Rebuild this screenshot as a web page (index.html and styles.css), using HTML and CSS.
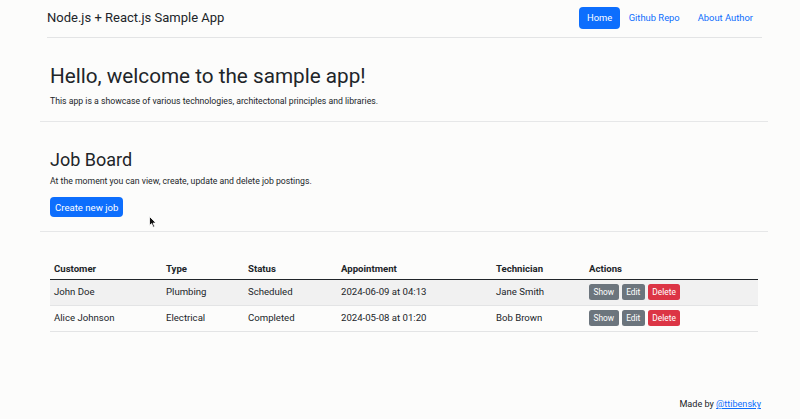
FILE: index.html
```html
<!DOCTYPE html>
<html lang="en">
<head>
<meta charset="utf-8">
<title>Node.js + React.js Sample App</title>
<link rel="stylesheet" href="styles.css">
</head>
<body>
<header class="navbar">
  <a class="brand" href="#">Node.js + React.js Sample App</a>
  <nav class="nav">
    <a class="nav-link active" href="#">Home</a>
    <a class="nav-link" href="#">Github Repo</a>
    <a class="nav-link" href="#">About Author</a>
  </nav>
</header>
<main class="main">
  <section class="hero">
    <h1 class="title">Hello, welcome to the sample app!</h1>
    <p class="lead">This app is a showcase of various technologies, architectonal principles and libraries.</p>
  </section>
  <hr class="divider">
  <section class="board">
    <h2 class="subtitle">Job Board</h2>
    <p class="lead">At the moment you can view, create, update and delete job postings.</p>
    <button class="btn btn-primary">Create new job</button>
  </section>
  <hr class="divider">
  <section class="jobs">
    <table class="table">
      <colgroup>
        <col class="c1"><col class="c2"><col class="c3"><col class="c4"><col class="c5"><col class="c6">
      </colgroup>
      <thead>
        <tr><th>Customer</th><th>Type</th><th>Status</th><th>Appointment</th><th>Technician</th><th>Actions</th></tr>
      </thead>
      <tbody>
        <tr class="striped">
          <td>John Doe</td><td>Plumbing</td><td>Scheduled</td><td>2024-06-09 at 04:13</td><td>Jane Smith</td>
          <td><div class="actions"><button class="btn-sm gray">Show</button><button class="btn-sm gray">Edit</button><button class="btn-sm red">Delete</button></div></td>
        </tr>
        <tr>
          <td>Alice Johnson</td><td>Electrical</td><td>Completed</td><td>2024-05-08 at 01:20</td><td>Bob Brown</td>
          <td><div class="actions"><button class="btn-sm gray">Show</button><button class="btn-sm gray">Edit</button><button class="btn-sm red">Delete</button></div></td>
        </tr>
      </tbody>
    </table>
  </section>
</main>
<footer class="footer">Made by <a href="#">@ttibensky</a></footer>
<svg class="cursor" width="8" height="12" viewBox="0 0 8 12"><path d="M0.5 0.5 L0.5 9.5 L2.6 7.6 L4.2 11.2 L5.6 10.6 L4.1 7.1 L7 7 Z" fill="#111" stroke="#fff" stroke-width="0.8"/></svg>
</body>
</html>
```
FILE: styles.css
```css
* { box-sizing: border-box; }
html, body { margin: 0; padding: 0; }
body {
  background: #fcfcfb;
  color: #212529;
  font-family: Roboto, "Noto Sans", sans-serif;
  font-size: 9.6px;
  line-height: 1.5;
  height: 419px;
  overflow: hidden;
  position: relative;
}
a { color: #0d6efd; text-decoration: none; }

.navbar {
  margin: 0 38px 0 47px;
  height: 38px;
  border-bottom: 1px solid #e3e4e5;
  display: flex;
  align-items: center;
  justify-content: space-between;
}
.brand {
  color: #212529;
  font-size: 13px;
  padding-bottom: 2px;
}
.nav { display: flex; align-items: center; padding-bottom: 1px; }
.nav-link {
  font-size: 9.4px;
  line-height: 22px;
  height: 22px;
  padding: 0 9px;
  border-radius: 4px;
  color: #0d6efd;
}
.nav-link.active { background: #0d6efd; color: #fff; padding: 0 7.5px; }

.main { margin: 0 32px 0 40px; }
.hero { padding: 24px 10px 0; }
.title {
  margin: 0;
  font-size: 20.7px;
  font-weight: 400;
  line-height: 29px;
}
.lead { margin: 3px 0 0; font-size: 8.7px; line-height: 14px; }
.divider {
  border: 0;
  border-top: 1px solid #e6e7e8;
  margin: 13px 0 0;
}
.board { padding: 26px 10px 0; }
.subtitle {
  margin: 0;
  font-size: 18px;
  font-weight: 400;
  line-height: 23px;
}
.board .lead { margin-top: 3px; }
.btn {
  font-family: inherit;
  border: 0;
  border-radius: 4px;
  margin-top: 9px;
  height: 20px;
  padding: 0 5px;
  font-size: 9.6px;
  display: block;
}
.btn-primary { background: #0d6efd; color: #fff; }
.board + .divider { margin-top: 14px; }

.jobs { padding: 23px 10px 0; }
.table {
  width: 100%;
  border-collapse: collapse;
  table-layout: fixed;
}
.c1 { width: 112px; } .c2 { width: 82px; } .c3 { width: 93px; }
.c4 { width: 155px; } .c5 { width: 93px; }
.table th {
  text-align: left;
  font-weight: 700;
  font-size: 9.6px;
  height: 24px;
  padding: 4px 4px 0;
  border-bottom: 1.5px solid #212529;
}
.table td {
  height: 26px;
  padding: 0 4px;
  border-bottom: 1px solid #e3e4e5;
  vertical-align: middle;
  font-size: 9.6px;
}
.striped td { background: #f1f1f1; }
.actions { display: flex; gap: 3px; }
.btn-sm {
  font-family: inherit;
  font-size: 8.4px;
  border: 0;
  border-radius: 2.5px;
  height: 16px;
  padding: 0 4.5px;
  color: #fff;
}
.gray { background: #6c757d; }
.red { background: #dc3545; }

.footer {
  position: absolute;
  right: 39px;
  bottom: 7px;
  font-size: 9.1px;
}
.footer a { text-decoration: underline; }
.cursor { position: absolute; left: 149px; top: 216px; }
```
